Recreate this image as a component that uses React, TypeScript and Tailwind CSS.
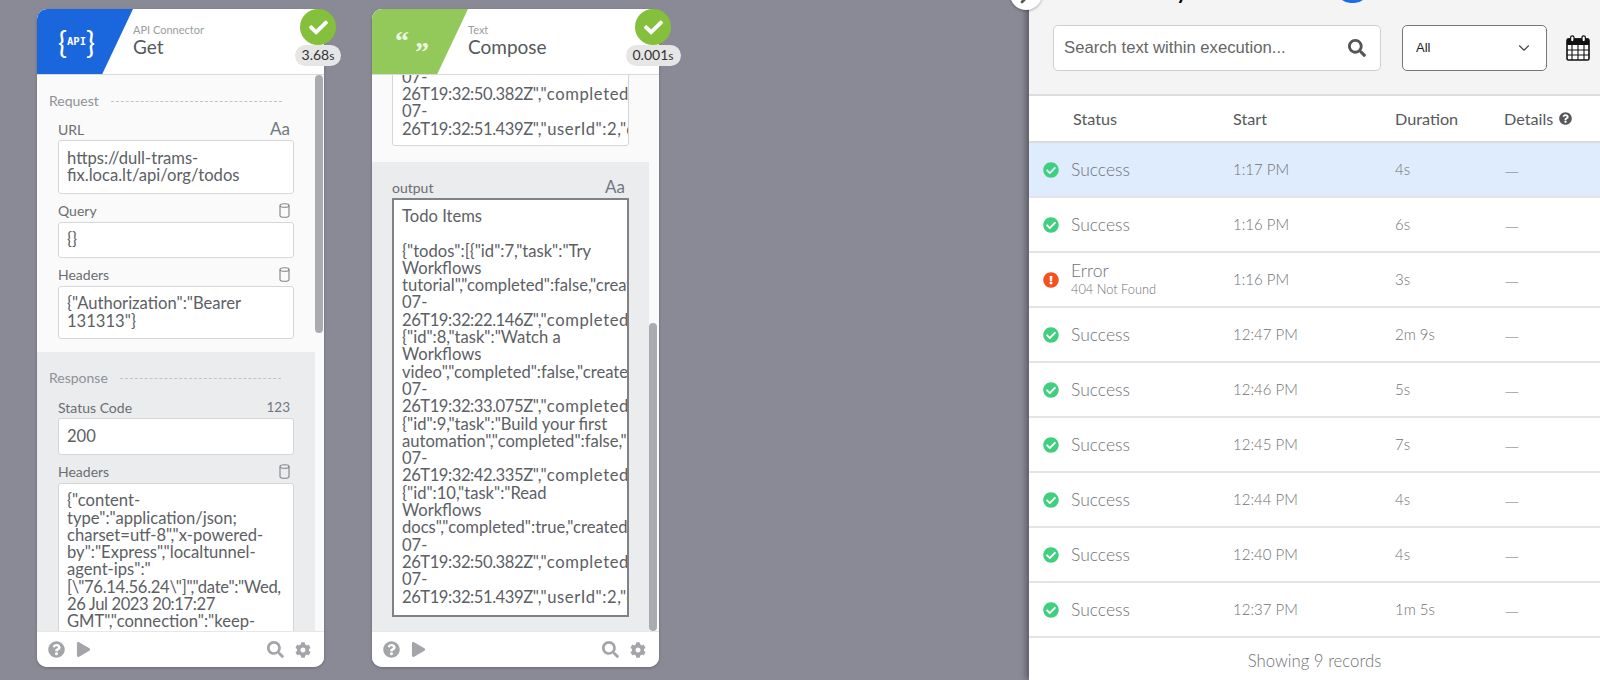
import React from "react";
import { FaCheck, FaCheckCircle, FaCog, FaExclamationCircle, FaPlay, FaQuestionCircle, FaSearch } from "react-icons/fa";
import { FiChevronDown, FiChevronRight } from "react-icons/fi";

const FONT = "font-['Lato','Open_Sans',sans-serif]";

function Db() {
  return (
    <svg width="11" height="15" viewBox="0 0 11 15" fill="none" stroke="#7d8288" strokeWidth="1.1">
      <ellipse cx="5.5" cy="2.5" rx="4.5" ry="1.8" />
      <path d="M1 2.5V12.5C1 13.5 3 14.3 5.5 14.3S10 13.5 10 12.5V2.5" />
    </svg>
  );
}

function Field({ label, kind, children }: { label: string; kind: "aa" | "db" | "num"; children: React.ReactNode }) {
  return (
    <div className="mt-[8px]">
      <div className="mb-[2px] flex h-[18px] items-center justify-between pr-[4px] text-[14px] text-[#6a6e72]">
        <span>{label}</span>
        {kind === "aa" && <span className="text-[17px] text-[#6f7880]">Aa</span>}
        {kind === "db" && <Db />}
        {kind === "num" && <span className="text-[13.5px] text-[#6f7880]">123</span>}
      </div>
      <div className="rounded-[3px] border border-[#d4d6d8] bg-white px-[8px] py-[8.5px] text-[16.6px] leading-[17.3px] text-[#5c6064]">
        {children}
      </div>
    </div>
  );
}

function SectionTitle({ title, dash }: { title: string; dash: string }) {
  return (
    <div className="flex h-[18px] items-center gap-[12px] text-[14px] text-[#8e9296]">
      <span>{title}</span>
      <span className={`mt-[2px] border-t border-dashed border-[#c0c3c6] ${dash}`} />
    </div>
  );
}

function Footer() {
  return (
    <div className="flex h-[36px] items-center justify-between rounded-b-[10px] border-t border-[#e6e7e8] bg-white pl-[11px] pr-[13px] text-[#a3a5a8]">
      <div className="flex items-center gap-[11px]">
        <FaQuestionCircle size={17} />
        <FaPlay size={15} />
      </div>
      <div className="flex items-center gap-[11px]">
        <FaSearch size={17} />
        <FaCog size={16} />
      </div>
    </div>
  );
}

function Card({ logo, logoBg, kicker, title, time, children }: { logo: React.ReactNode; logoBg: string; kicker: string; title: string; time: React.ReactNode; children: React.ReactNode }) {
  return (
    <div className="relative flex h-[658px] w-[287px] shrink-0 flex-col rounded-[10px] bg-white shadow-[0_1px_3px_rgba(0,0,0,0.25)]">
      <div className="flex h-[66px] shrink-0 rounded-t-[10px] border-b border-[#d8d9db] bg-white">
        <div className={`flex h-[65px] w-[96px] items-center rounded-tl-[10px] ${logoBg} [clip-path:polygon(0_0,100%_0,68%_100%,0_100%)]`}>
          {logo}
        </div>
        <div className="flex flex-col pt-[14px]">
          <span className="text-[11px] leading-[14px] text-[#9a9da0]">{kicker}</span>
          <span className="text-[19px] leading-[20px] text-[#55595c]">{title}</span>
        </div>
      </div>
      <div className="absolute left-[263px] top-0 flex w-[36px] flex-col items-center">
        <div className="flex h-[36px] w-[36px] items-center justify-center rounded-full bg-[#85c03c] text-white">
          <FaCheck size={19} />
        </div>
        <div className="whitespace-nowrap rounded-full bg-[#e6e6e6] px-[7px] text-[14px] leading-[20px] text-[#333]">{time}</div>
      </div>
      <div className="flex min-h-0 flex-1 bg-[#fafafa]">{children}</div>
      <Footer />
    </div>
  );
}

const S = ({ v }: { v: string }) => (
  <>
    {v}
    <span className="text-[12px]">s</span>
  </>
);

function Line({ text }: { text: string }) {
  if (text.startsWith("26T")) {
    return (
      <div className="whitespace-pre">
        <span className="tracking-[-0.45px]">{text.slice(0, 16)}</span>
        <span className="tracking-[0.6px]">{text.slice(16)}</span>
      </div>
    );
  }
  return <div className="whitespace-pre">{text}</div>;
}

const outputLines = [
  "Todo Items",
  " ",
  '{"todos":[{"id":7,"task":"Try',
  "Workflows",
  'tutorial","completed":false,"createdAt":"2023-',
  "07-",
  '26T19:32:22.146Z","completedAt":null,"userId":2',
  '{"id":8,"task":"Watch a',
  "Workflows",
  'video","completed":false,"createdAt":"2023-',
  "07-",
  '26T19:32:33.075Z","completedAt":null,"userId":2',
  '{"id":9,"task":"Build your first',
  'automation","completed":false,"createdAt":"2023-',
  "07-",
  '26T19:32:42.335Z","completedAt":null,"userId":2',
  '{"id":10,"task":"Read',
  "Workflows",
  'docs","completed":true,"createdAt":"2023-',
  "07-",
  '26T19:32:50.382Z","completedAt":"2023-',
  "07-",
  '26T19:32:51.439Z","userId":2,"deleted":false}',
];

const rows = [
  { s: "Success", t: "1:17 PM", d: "4s", active: true },
  { s: "Success", t: "1:16 PM", d: "6s" },
  { s: "Error", t: "1:16 PM", d: "3s", err: true },
  { s: "Success", t: "12:47 PM", d: "2m 9s" },
  { s: "Success", t: "12:46 PM", d: "5s" },
  { s: "Success", t: "12:45 PM", d: "7s" },
  { s: "Success", t: "12:44 PM", d: "4s" },
  { s: "Success", t: "12:40 PM", d: "4s" },
  { s: "Success", t: "12:37 PM", d: "1m 5s" },
];

function Calendar() {
  return (
    <svg width="24" height="26" viewBox="0 0 24 26">
      <rect x="1" y="4" width="22" height="21" rx="1.5" fill="#fff" stroke="#111" strokeWidth="1.6" />
      <path d="M1 4.5a1 1 0 0 1 1-1h20a1 1 0 0 1 1 1V10H1z" fill="#111" />
      <path d="M6 10V25M12 10V25M18 10V25M1 15H23M1 20H23" stroke="#111" strokeWidth="1.1" />
      <rect x="4.6" y="0.8" width="3.4" height="6" rx="1.7" fill="#fff" stroke="#111" strokeWidth="1.2" />
      <rect x="16" y="0.8" width="3.4" height="6" rx="1.7" fill="#fff" stroke="#111" strokeWidth="1.2" />
    </svg>
  );
}

export default function App() {
  return (
    <div className={`flex h-[680px] w-[1600px] overflow-hidden bg-[#8a8a96] ${FONT}`}>
      <div className="flex items-start gap-[48px] pl-[37px] pt-[9px]">
        <Card
          logoBg="bg-[#1a66dc]"
          kicker="API Connector"
          title="Get"
          time={<S v="3.68" />}
          logo={
            <div className="flex items-center pl-[21px] text-white">
              <span className="text-[30px] font-normal leading-none">{"{"}</span>
              <span className="font-['DejaVu_Sans_Mono',monospace] text-[10.5px] font-bold">API</span>
              <span className="text-[30px] font-normal leading-none">{"}"}</span>
            </div>
          }
        >
          <div className="h-[557px] w-[278px] overflow-hidden">
            <div className="px-[12px] pb-[13px] pt-[16px]">
              <SectionTitle title="Request" dash="w-[171px]" />
              <div className="pb-[3px]" />
              <div className="pl-[9px] pr-[9px]">
                <Field label="URL" kind="aa">
                  https://dull-trams-
                  <br />
                  fix.loca.lt/api/org/todos
                </Field>
                <Field label="Query" kind="db">{"{}"}</Field>
                <Field label="Headers" kind="db">
                  {'{"Authorization":"Bearer'}
                  <br />
                  {'131313"}'}
                </Field>
              </div>
            </div>
            <div className="h-[281px] overflow-hidden bg-[#ebecee] px-[12px] pt-[16px]">
              <SectionTitle title="Response" dash="w-[161px]" />
              <div className="pb-[4px]" />
              <div className="pl-[9px] pr-[9px]">
                <Field label="Status Code" kind="num">200</Field>
                <Field label="Headers" kind="db">
                  {'{"content-'}
                  <br />
                  {'type":"application/json;'}
                  <br />
                  {'charset=utf-8","x-powered-'}
                  <br />
                  {'by":"Express","localtunnel-'}
                  <br />
                  {'agent-ips":"'}
                  <br />
                  <span className="tracking-[-0.3px]">{'[\\"76.14.56.24\\"]","date":"Wed,'}</span>
                  <br />
                  <span className="tracking-[-0.4px]">26 Jul 2023 20:17:27</span>
                  <br />
                  {'GMT","connection":"keep-'}
                  <br />
                  {'alive"}'}
                </Field>
              </div>
            </div>
          </div>
          <div className="relative w-[9px]">
            <div className="h-[258px] w-[8px] rounded-full bg-[#a9abb0]" />
          </div>
        </Card>

        <Card
          logoBg="bg-[#93c85a]"
          kicker="Text"
          title="Compose"
          time={<S v="0.001" />}
          logo={
            <div className="flex items-start gap-[6px] pl-[23px] font-['Liberation_Serif',serif] text-[28px] font-bold leading-none text-[#eef6e2]">
              <span className="-translate-y-[1px]">“</span>
              <span className="translate-y-[10px]">”</span>
            </div>
          }
        >
          <div className="h-[557px] w-[277px] overflow-hidden">
            <div className="flex h-[87px] flex-col justify-end overflow-hidden px-[20px] pb-[16px]">
              <div className="shrink-0 overflow-hidden rounded-[3px] border border-[#d4d6d8] bg-white px-[9px] pb-[7px] text-[16.6px] leading-[17.3px] text-[#5c6064]">
                <Line text="07-" />
                <Line text={'26T19:32:50.382Z","completedAt":"2023-'} />
                <Line text="07-" />
                <Line text={'26T19:32:51.439Z","userId":2,"deleted":false}'} />
              </div>
            </div>
            <div className="h-[470px] bg-[#ebecee] px-[20px] pt-[16px]">
              <div className="mb-[2px] flex h-[18px] items-center justify-between pr-[4px] text-[14px] text-[#6a6e72]">
                <span>output</span>
                <span className="text-[17px] text-[#6f7880]">Aa</span>
              </div>
              <div className="h-[419px] overflow-hidden border-2 border-[#808285] bg-white px-[8px] pt-[8px] text-[16.6px] leading-[17.3px] text-[#5c6064]">
                {outputLines.map((l, i) => (
                  <Line key={i} text={l} />
                ))}
              </div>
            </div>
          </div>
          <div className="flex w-[10px] flex-col justify-end">
            <div className="h-[308px] w-[8px] rounded-full bg-[#a9abb0]" />
          </div>
        </Card>
      </div>

      <div className="relative ml-auto flex h-[680px] w-[571px] flex-col bg-white shadow-[-3px_0_6px_rgba(0,0,0,0.35)]">
        <div className="absolute -left-[19px] -top-[22px] z-10 flex h-[32px] w-[32px] items-center justify-center rounded-full bg-white text-[#555] shadow-[0_1px_3px_rgba(0,0,0,0.3)]">
          <FiChevronRight size={38} />
        </div>
        <div className="h-[96px] shrink-0 border-b-2 border-[#dcdce0] bg-[#f4f4f4]">
          <div className="-mt-[24px] flex h-[27px] items-end overflow-visible">
            <span className="ml-[92px] w-[58px] text-right text-[20px] font-bold leading-[24px] text-black">History</span>
            <span className="ml-[158px] h-[27px] w-[31px] rounded-full bg-[#1a6fe8]" />
          </div>
          <div className="flex items-center pl-[24px] pt-[22px]">
            <div className="flex h-[46px] w-[328px] items-center justify-between rounded-[5px] border border-[#cfcfd2] bg-white pl-[10px] pr-[14px]">
              <span className="font-['Liberation_Sans',sans-serif] text-[16.7px] text-[#666]">Search text within execution...</span>
              <FaSearch size={18} className="text-[#555]" />
            </div>
            <div className="ml-[21px] flex h-[46px] w-[145px] items-center justify-between rounded-[5px] border border-[#77777d] bg-white pl-[13px] pr-[13px]">
              <span className="font-['Liberation_Sans',sans-serif] text-[13px] text-[#222]">All</span>
              <FiChevronDown size={18} strokeWidth={1.5} className="text-[#444]" />
            </div>
            <div className="ml-[19px]"><Calendar /></div>
          </div>
        </div>
        <div className="grid h-[47px] shrink-0 grid-cols-[204px_162px_109px_1fr] items-center border-b-2 border-[#dcdce0] pt-[1px] text-[16.2px] text-[#55595c]">
          <span className="pl-[44px]">Status</span>
          <span>Start</span>
          <span>Duration</span>
          <span className="flex items-center gap-[6px]">Details <FaQuestionCircle size={13} /></span>
        </div>
        {rows.map((r, i) => (
          <div
            key={i}
            className={`grid h-[55px] shrink-0 grid-cols-[204px_162px_109px_1fr] items-center border-b-2 border-[#e4e4e6] text-[15px] font-light text-[#6f7275] ${r.active ? "bg-[#dfecfd]" : "bg-white"}`}
          >
            <div className="flex items-center gap-[12px] pl-[14px]">
              {r.err ? <FaExclamationCircle size={16} className="text-[#f4511e]" /> : <FaCheckCircle size={16} className="text-[#3fcf7f]" />}
              <div className="flex flex-col">
                <span className="text-[17.5px] leading-[19px]">{r.s}</span>
                {r.err && <span className="text-[12.8px] leading-[18px]">404 Not Found</span>}
              </div>
            </div>
            <span>{r.t}</span>
            <span>{r.d}</span>
            <span className="text-[20px]">—</span>
          </div>
        ))}
        <div className="flex flex-1 items-center justify-center pt-[3px] text-[16.8px] font-light text-[#6f7275]">Showing 9 records</div>
      </div>
    </div>
  );
}
